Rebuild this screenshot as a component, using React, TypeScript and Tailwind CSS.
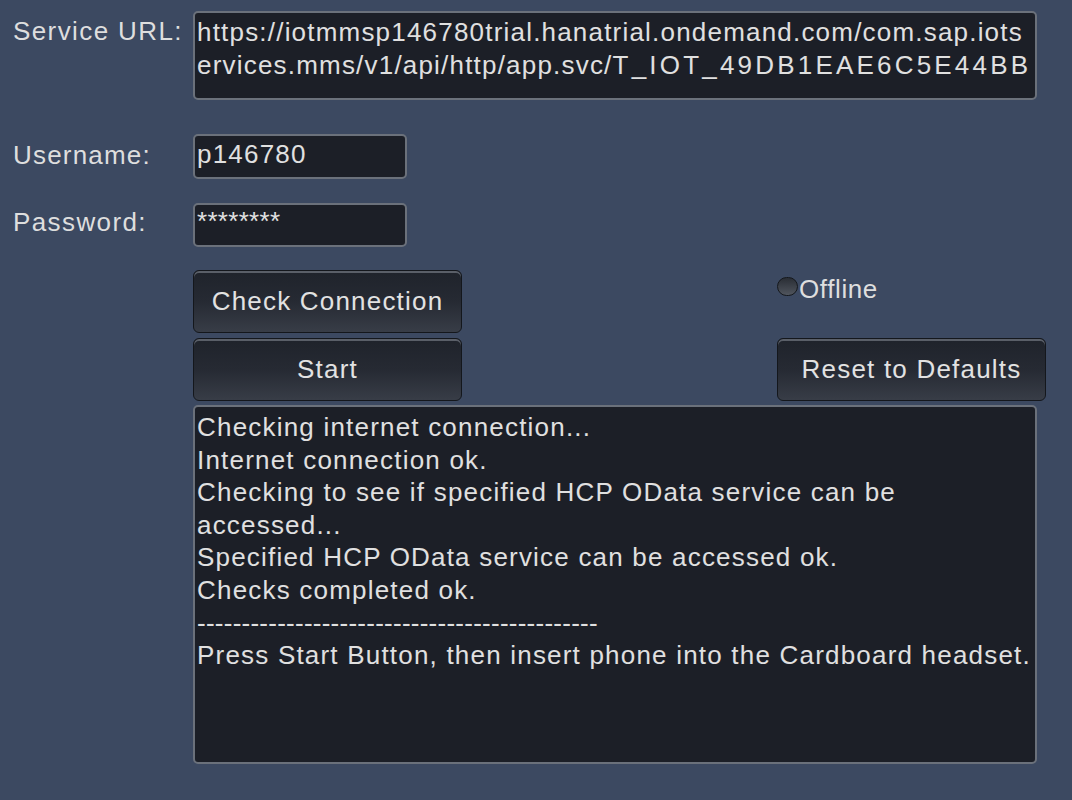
import React from "react";

const field =
  "bg-[#1c1f27] border-2 border-[#6b717b] rounded-[5px] text-[26px] leading-[32.6px] tracking-[1.2px] text-[#e0e0e0] px-[2px]";
const btn =
  "w-[269px] h-[63px] rounded-[6px] border border-[#14171c] bg-linear-to-b from-[#1f232b] via-[#262a33] to-[#383d47] shadow-[inset_0_2px_0_#5a5f68] flex items-center justify-center text-[26px] tracking-[1.2px] text-[#e2e2e2]";

export default function App() {
  const log = [
    "Checking internet connection...",
    "Internet connection ok.",
    "Checking to see if specified HCP OData service can be",
    "accessed...",
    "Specified HCP OData service can be accessed ok.",
    "Checks completed ok.",
  ];
  return (
    <div className="w-[1072px] h-[800px] bg-[#3c4961] pt-[11px] font-['Liberation_Sans',Arial,sans-serif] text-[#dedede] overflow-hidden">
      <div className="flex">
        <div className="w-[193px] pl-[13px] pt-[4px] text-[26px] leading-[33px] tracking-[1.4px]">Service URL:</div>
        <div className={field + " w-[844px] h-[89px] pt-[3px] whitespace-nowrap"}>
          https://iotmmsp146780trial.hanatrial.ondemand.com/com.sap.iots
          <br />
          ervices.mms/v1/api/http/app.svc/
          <span className="tracking-[3.2px]">T_IOT_49DB1EAE6C5E44BB</span>
        </div>
      </div>
      <div className="flex mt-[34px]">
        <div className="w-[193px] pl-[13px] pt-[5px] text-[26px] leading-[33px] tracking-[1.2px]">Username:</div>
        <div className={field + " w-[214px] h-[45px] pt-[2px]"}>p146780</div>
      </div>
      <div className="flex mt-[24px]">
        <div className="w-[193px] pl-[13px] pt-[3px] text-[26px] leading-[33px] tracking-[1.4px]">Password:</div>
        <div className={field + " w-[214px] h-[44px] pt-0 !tracking-[0.3px] text-[#cfcfcf]"}>********</div>
      </div>
      <div className="flex mt-[23px] ml-[193px]">
        <div className={btn}>Check Connection</div>
        <div className="ml-[315px] flex items-center h-[38px] text-[26px] tracking-[0.6px]">
          <span className="w-[21px] h-[19px] rounded-full border border-[#15181c] bg-linear-to-b from-[#2a2e35] to-[#50555e] mr-[1px] mb-[6px] shrink-0"></span>
          Offline
        </div>
      </div>
      <div className="flex mt-[5px] ml-[193px]">
        <div className={btn}>Start</div>
        <div className={btn + " ml-[315px]"}>Reset to Defaults</div>
      </div>
      <div className={field + " ml-[193px] mt-[4px] w-[844px] h-[359px] pt-[4px] whitespace-nowrap"}>
        {log.map((l, i) => (
          <div key={i}>{l}</div>
        ))}
        <div className="tracking-[0.25px]">---------------------------------------------</div>
        <div>Press Start Button, then insert phone into the Cardboard headset.</div>
      </div>
    </div>
  );
}
